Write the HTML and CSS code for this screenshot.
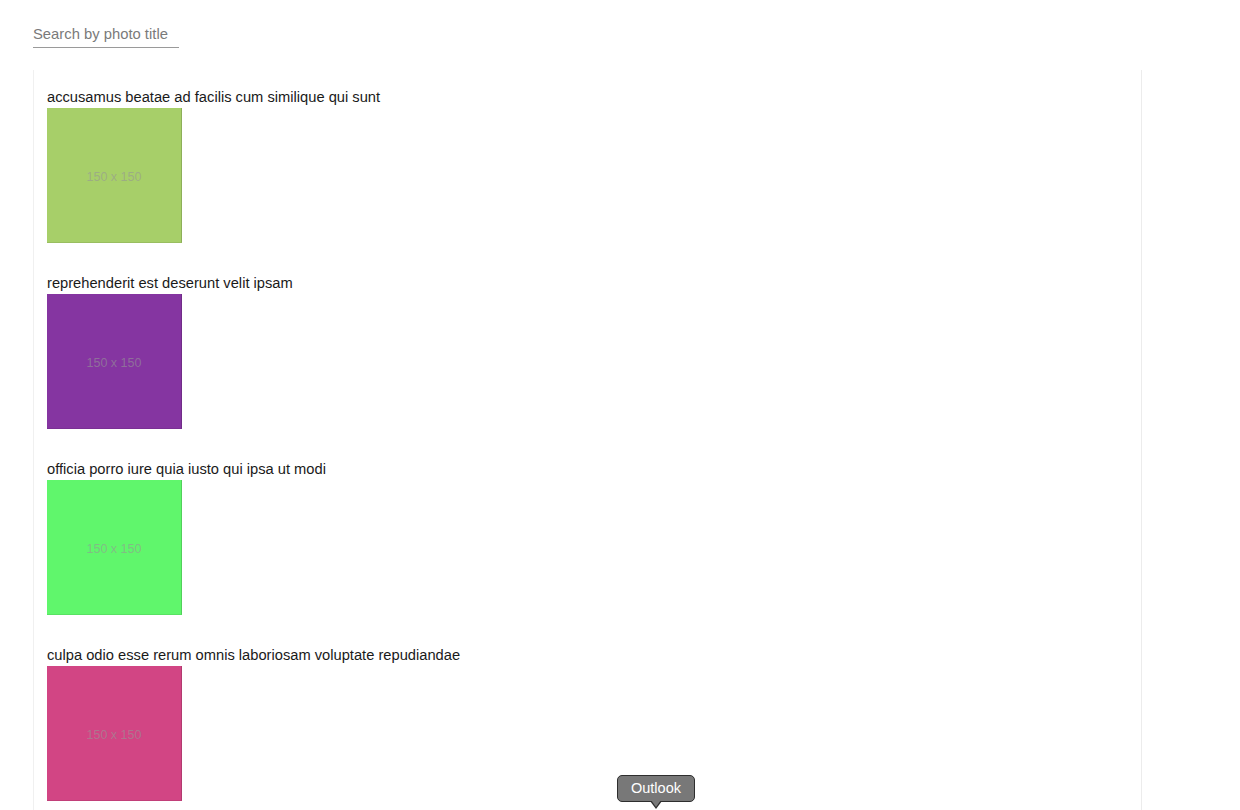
FILE: index.html
```html
<!DOCTYPE html>
<html>
<head>
<meta charset="utf-8">
<link rel="stylesheet" href="styles.css">
</head>
<body>
<div class="page">
  <div class="search">
    <input class="search-input" type="text" placeholder="Search by photo title">
  </div>
  <div class="list">
    <div class="item">
      <div class="title">accusamus beatae ad facilis cum similique qui sunt</div>
      <div class="thumb c1"><span>150 x 150</span></div>
    </div>
    <div class="item">
      <div class="title">reprehenderit est deserunt velit ipsam</div>
      <div class="thumb c2"><span>150 x 150</span></div>
    </div>
    <div class="item">
      <div class="title">officia porro iure quia iusto qui ipsa ut modi</div>
      <div class="thumb c3"><span>150 x 150</span></div>
    </div>
    <div class="item">
      <div class="title">culpa odio esse rerum omnis laboriosam voluptate repudiandae</div>
      <div class="thumb c4"><span>150 x 150</span></div>
    </div>
  </div>
</div>
<div class="tooltip">Outlook</div>
</body>
</html>
```
FILE: styles.css
```css
html, body {
  margin: 0;
  padding: 0;
  background: #ffffff;
  height: 810px;
  overflow: hidden;
}
body {
  font-family: "Liberation Sans", Arial, sans-serif;
  color: #1a1a1a;
}
.page {
  padding: 23px 0 0 33px;
}
.search {
  height: 47px;
}
.search-input {
  display: block;
  width: 146px;
  height: 25px;
  box-sizing: border-box;
  border: none;
  border-bottom: 1px solid #9a9a9a;
  padding: 0 0 3px 0;
  margin: 0;
  font-family: "Liberation Sans", Arial, sans-serif;
  font-size: 14.8px;
  outline: none;
  background: transparent;
}
.search-input::placeholder {
  color: #7a7a7a;
}
.list {
  width: 1109px;
  box-sizing: border-box;
  border-left: 1px solid #f0f0f0;
  border-right: 1px solid #ececec;
  padding: 17px 0 0 13px;
  height: 740px;
  overflow: hidden;
}
.item {
  margin-bottom: 30px;
}
.title {
  font-size: 14.7px;
  line-height: 20px;
  color: #1a1a1a;
}
.thumb {
  width: 135px;
  height: 135px;
  margin-top: 1px;
  display: flex;
  align-items: center;
  justify-content: center;
  box-sizing: border-box;
  border-right: 1px solid rgba(0, 0, 0, 0.15);
  border-bottom: 1px solid rgba(0, 0, 0, 0.08);
}
.thumb span {
  font-size: 12.5px;
  color: rgba(150, 150, 150, 0.6);
  margin-top: 4px;
}
.c1 { background: #a7cf69; }
.c2 { background: #8535a1; }
.c3 { background: #60f66c; }
.c4 { background: #d24584; }
.tooltip {
  position: absolute;
  left: 617px;
  top: 775px;
  width: 78px;
  height: 27px;
  box-sizing: border-box;
  background: #787878;
  border: 1px solid #2e2e2e;
  border-radius: 5px;
  color: #ffffff;
  font-family: "Liberation Sans", Arial, sans-serif;
  font-size: 14.5px;
  line-height: 25px;
  text-align: center;
}
.tooltip::after {
  content: "";
  position: absolute;
  left: 32px;
  bottom: -8px;
  width: 0;
  height: 0;
  border-left: 6px solid transparent;
  border-right: 6px solid transparent;
  border-top: 8px solid #2e2e2e;
}
.tooltip::before {
  content: "";
  position: absolute;
  left: 33px;
  bottom: -6px;
  width: 0;
  height: 0;
  border-left: 5px solid transparent;
  border-right: 5px solid transparent;
  border-top: 7px solid #787878;
  z-index: 1;
}
```
